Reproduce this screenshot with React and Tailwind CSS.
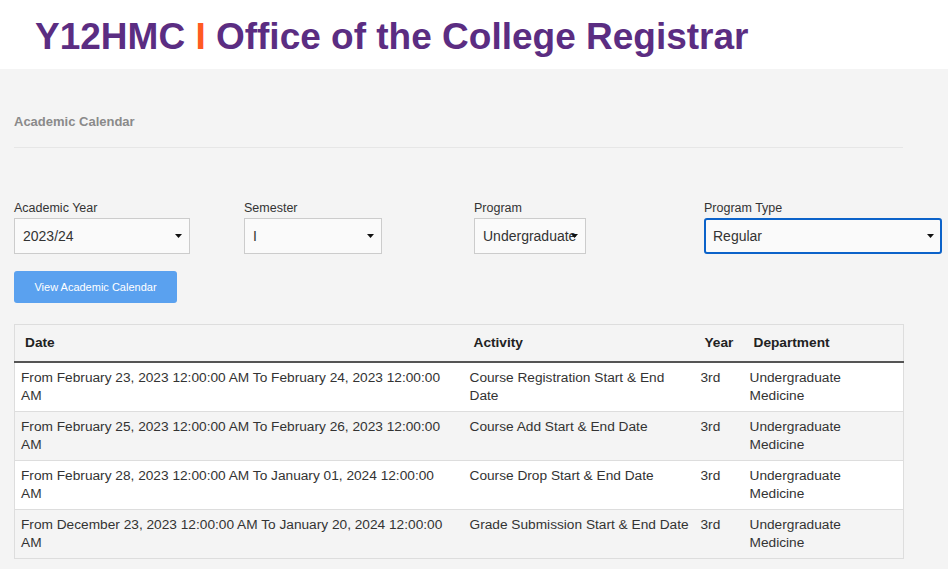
import React from "react";

const Caret = () => (
  <svg width="7" height="4" viewBox="0 0 7 4" className="shrink-0">
    <polygon points="0,0 7,0 3.5,4" fill="#111" />
  </svg>
);

function Field({ label, value, width, focused, narrow }) {
  return (
    <div>
      <div className="text-[12.5px] leading-[15px] text-[#333] mb-[2px]">{label}</div>
      <div
        className={
          focused
            ? "h-[36px] bg-[#fafafa] border-2 border-[#0b62c9] rounded-[3px] flex items-center justify-between pl-[7px] pr-[6px]"
            : "h-[36px] bg-[#fafafa] border border-[#cccccc] flex items-center justify-between pl-[8px] pr-[7px]"
        }
        style={{ width }}
      >
        <span className="text-[14px] text-[#333]">{value}</span>
        {narrow ? (
          <span className="relative -ml-[14px]">
            <Caret />
          </span>
        ) : (
          <Caret />
        )}
      </div>
    </div>
  );
}

const rows = [
  ["From February 23, 2023 12:00:00 AM To February 24, 2023 12:00:00 AM", "Course Registration Start & End Date"],
  ["From February 25, 2023 12:00:00 AM To February 26, 2023 12:00:00 AM", "Course Add Start & End Date"],
  ["From February 28, 2023 12:00:00 AM To January 01, 2024 12:00:00 AM", "Course Drop Start & End Date"],
  ["From December 23, 2023 12:00:00 AM To January 20, 2024 12:00:00 AM", "Grade Submission Start & End Date"],
];

export default function App() {
  return (
    <div className="min-h-screen bg-[#f4f4f4] font-['Liberation_Sans',Arial,sans-serif] text-[#333]">
      <header className="bg-white h-[69px] pl-[35px] pt-[18px]">
        <h1 className="text-[37px] leading-[37px] font-bold text-[#5b2d82] whitespace-nowrap">
          Y12HMC <span className="text-[#ff5a22]">I</span> Office of the College Registrar
        </h1>
      </header>
      <main className="px-[14px]">
        <div className="w-[889px] border-b border-[#e6e6e6] pt-[45px] pb-[17px]">
          <h2 className="text-[13px] leading-[16px] font-bold text-[#8a8a8a]">Academic Calendar</h2>
        </div>
        <div className="grid grid-cols-[230px_230px_230px_238px] mt-[53px]">
          <Field label="Academic Year" value="2023/24" width={176} />
          <Field label="Semester" value="I" width={138} />
          <Field label="Program" value="Undergraduate" width={112} narrow />
          <Field label="Program Type" value="Regular" width={238} focused />
        </div>
        <button className="mt-[17px] w-[163px] h-[32px] rounded-[3px] bg-[#5aa1ef] text-white text-[11px]">
          View Academic Calendar
        </button>
        <table className="mt-[21px] w-[889px] border border-[#dddddd] border-collapse table-fixed text-[13.7px] leading-[18px]">
          <colgroup>
            <col className="w-[452px]" />
            <col className="w-[231px]" />
            <col className="w-[49px]" />
            <col className="w-[157px]" />
          </colgroup>
          <thead>
            <tr className="bg-[#f4f4f4] border-b-2 border-[#555]">
              <th className="text-left font-bold text-[#222] h-[37px] pl-[10px] pr-[4px] align-middle">Date</th>
              <th className="text-left font-bold text-[#222] pl-[7px] pr-[4px]">Activity</th>
              <th className="text-left font-bold text-[#222] pl-[7px] pr-[0px] whitespace-nowrap">Year</th>
              <th className="text-left font-bold text-[#222] pl-[7px] pr-[4px]">Department</th>
            </tr>
          </thead>
          <tbody>
            {rows.map((r, i) => (
              <tr key={i} className={i % 2 === 0 ? "bg-white border-t border-[#dddddd]" : "bg-[#f4f4f4] border-t border-[#dddddd]"}>
                <td className="align-top pt-[6px] pb-[6px] pl-[6px] pr-[12px] h-[49px]">{r[0]}</td>
                <td className="align-top pt-[6px] pb-[6px] pl-[3px] pr-[2px]">{r[1]}</td>
                <td className="align-top pt-[6px] pb-[6px] pl-[3px]">3rd</td>
                <td className="align-top pt-[6px] pb-[6px] pl-[3px] pr-[40px]">Undergraduate Medicine</td>
              </tr>
            ))}
          </tbody>
        </table>
      </main>
    </div>
  );
}
